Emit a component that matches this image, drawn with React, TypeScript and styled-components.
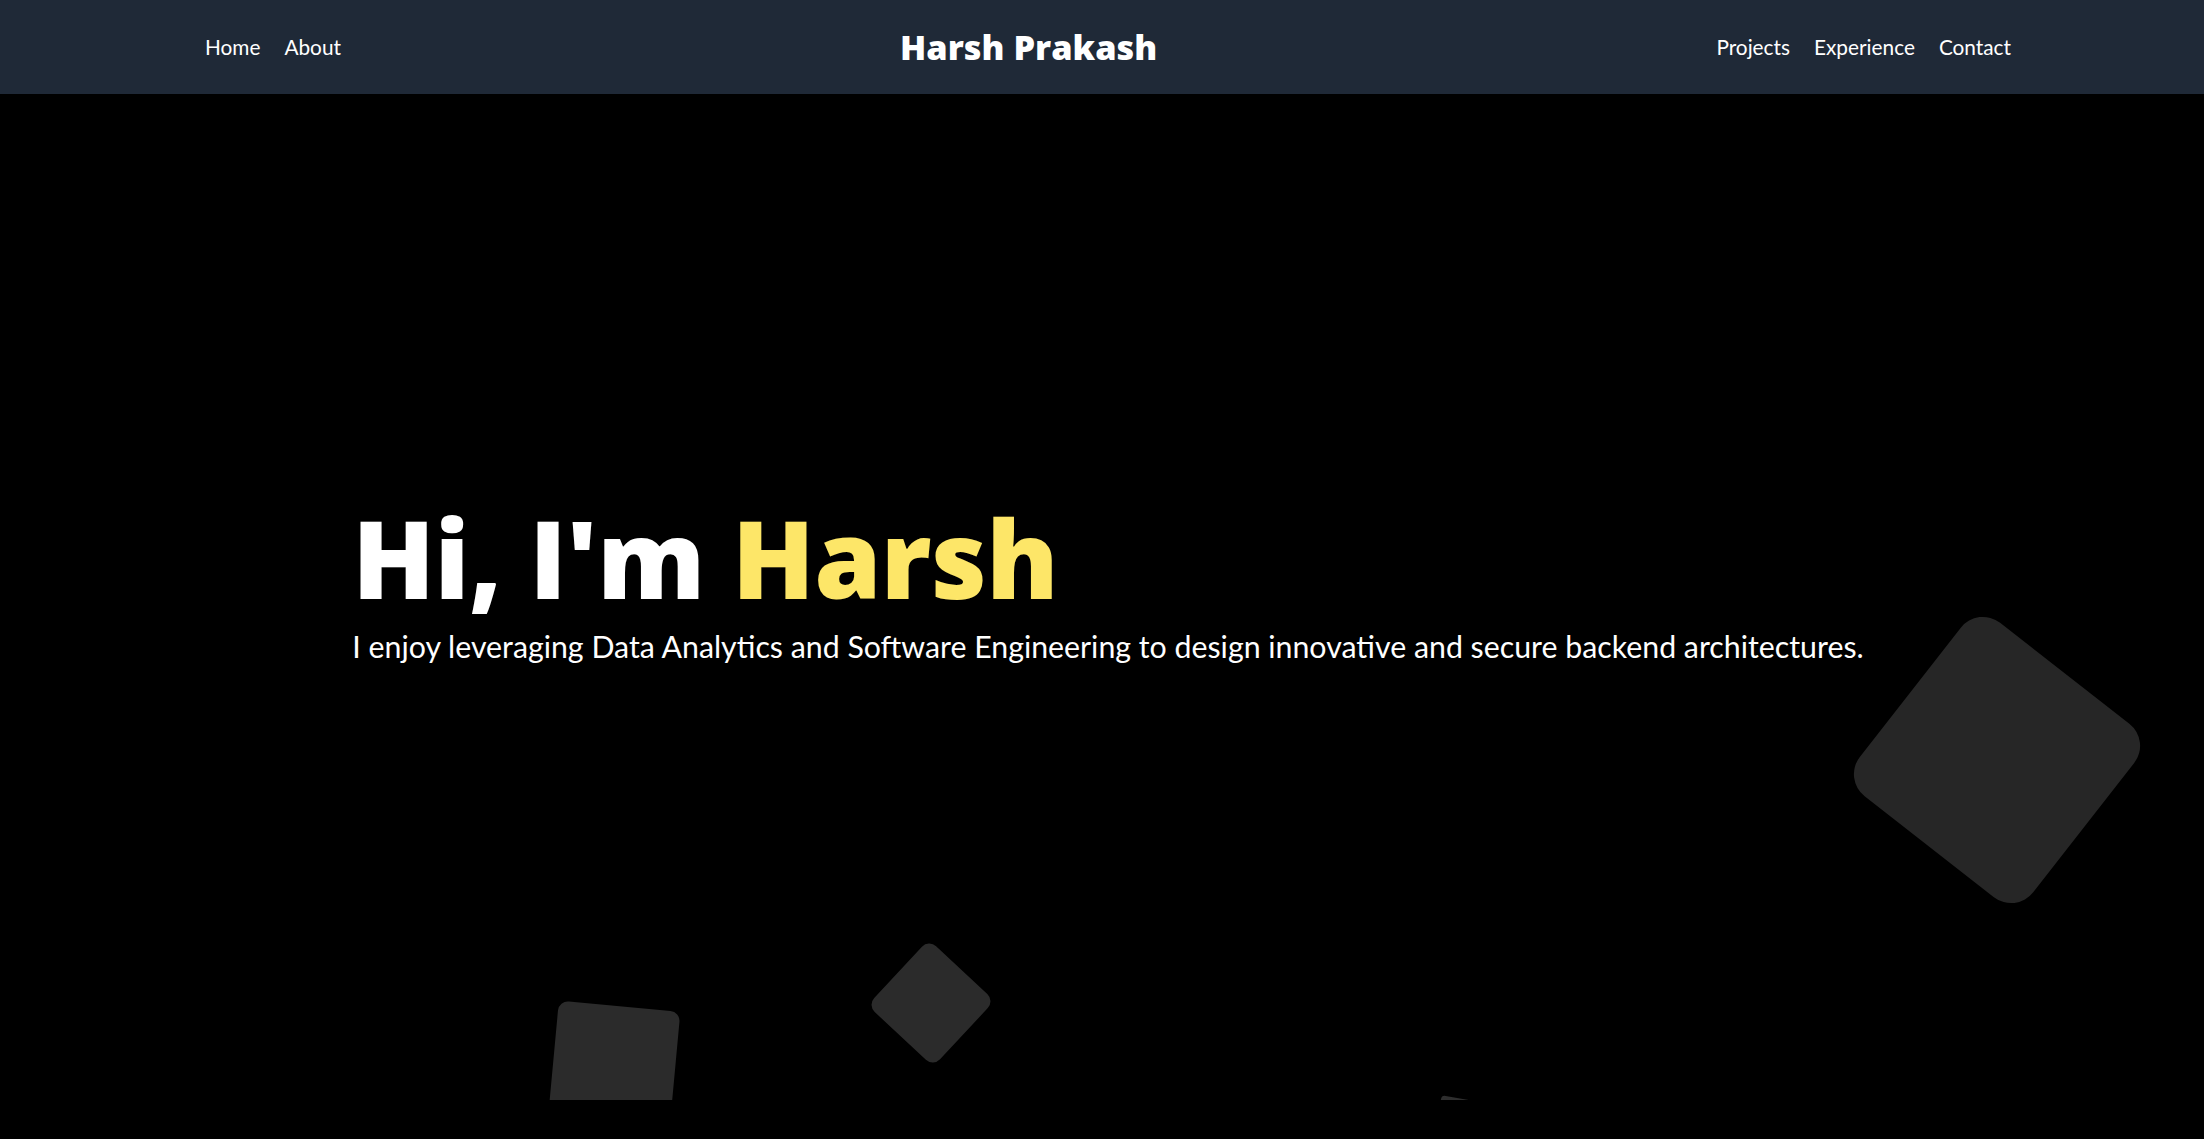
import React from "react";
import styled, { createGlobalStyle } from "styled-components";

const GlobalStyle = createGlobalStyle`
  html, body {
    margin: 0;
    padding: 0;
    background: #000000;
    font-family: "Lato", "Open Sans", "Noto Sans", sans-serif;
  }
  * { box-sizing: border-box; }
`;

const Page = styled.div`
  width: 100%;
  min-height: 1139px;
  background: #000000;
`;

const Header = styled.header`
  height: 94px;
  background: #1f2937;
  display: flex;
  align-items: center;
  justify-content: space-between;
  padding: 0 193px 0 205px;
`;

const NavGroup = styled.nav`
  display: flex;
  align-items: center;
  gap: 24px;
`;

const NavLink = styled.a`
  color: #ffffff;
  font-size: 20.8px;
  line-height: 28px;
  text-decoration: none;
  cursor: pointer;
`;

const Brand = styled.div`
  color: #ffffff;
  font-family: "Open Sans", "Noto Sans", sans-serif;
  font-size: 34.3px;
  font-weight: 800;
  line-height: 40px;
`;

const Hero = styled.section`
  position: relative;
  height: 1006px;
  overflow: hidden;
  display: flex;
  justify-content: center;
  padding: 409px 0 0 12px;
`;

const HeroContent = styled.div`
  position: relative;
  z-index: 1;
  text-align: left;
`;

const Title = styled.h1`
  margin: 0;
  color: #ffffff;
  font-family: "Open Sans", "Noto Sans", sans-serif;
  font-size: 108px;
  font-weight: 800;
  line-height: 110px;
  letter-spacing: -0.6px;
`;

const Accent = styled.span`
  color: #fde668;
`;

const Subtitle = styled.p`
  margin: 11px 0 0;
  color: #ffffff;
  font-size: 30.3px;
  line-height: 45px;
`;

type ShapeProps = {
  $left: number;
  $top: number;
  $size: number;
  $rotate: number;
  $radius: number;
  $color: string;
};

const Shape = styled.div<ShapeProps>`
  position: absolute;
  left: ${(p) => p.$left}px;
  top: ${(p) => p.$top}px;
  width: ${(p) => p.$size}px;
  height: ${(p) => p.$size}px;
  border-radius: ${(p) => p.$radius}px;
  background: ${(p) => p.$color};
  transform: rotate(${(p) => p.$rotate}deg);
`;

const shapes: ShapeProps[] = [
  { $left: 1887, $top: 556, $size: 220, $rotate: 38, $radius: 28, $color: "#262626" },
  { $left: 886, $top: 864, $size: 90, $rotate: 43, $radius: 10, $color: "#2b2b2b" },
  { $left: 553, $top: 912, $size: 122, $rotate: 5.3, $radius: 10, $color: "#2b2b2b" },
  { $left: 1436, $top: 1006, $size: 60, $rotate: 10, $radius: 4, $color: "#2e2e2e" },
];

export default function App() {
  return (
    <Page>
      <GlobalStyle />
      <Header>
        <NavGroup>
          <NavLink>Home</NavLink>
          <NavLink>About</NavLink>
        </NavGroup>
        <Brand>Harsh Prakash</Brand>
        <NavGroup>
          <NavLink>Projects</NavLink>
          <NavLink>Experience</NavLink>
          <NavLink>Contact</NavLink>
        </NavGroup>
      </Header>
      <Hero>
        {shapes.map((s, i) => (
          <Shape key={i} {...s} />
        ))}
        <HeroContent>
          <Title>
            Hi, I'm <Accent>Harsh</Accent>
          </Title>
          <Subtitle>
            I enjoy leveraging Data Analytics and Software Engineering to design innovative and secure backend architectures.
          </Subtitle>
        </HeroContent>
      </Hero>
    </Page>
  );
}
